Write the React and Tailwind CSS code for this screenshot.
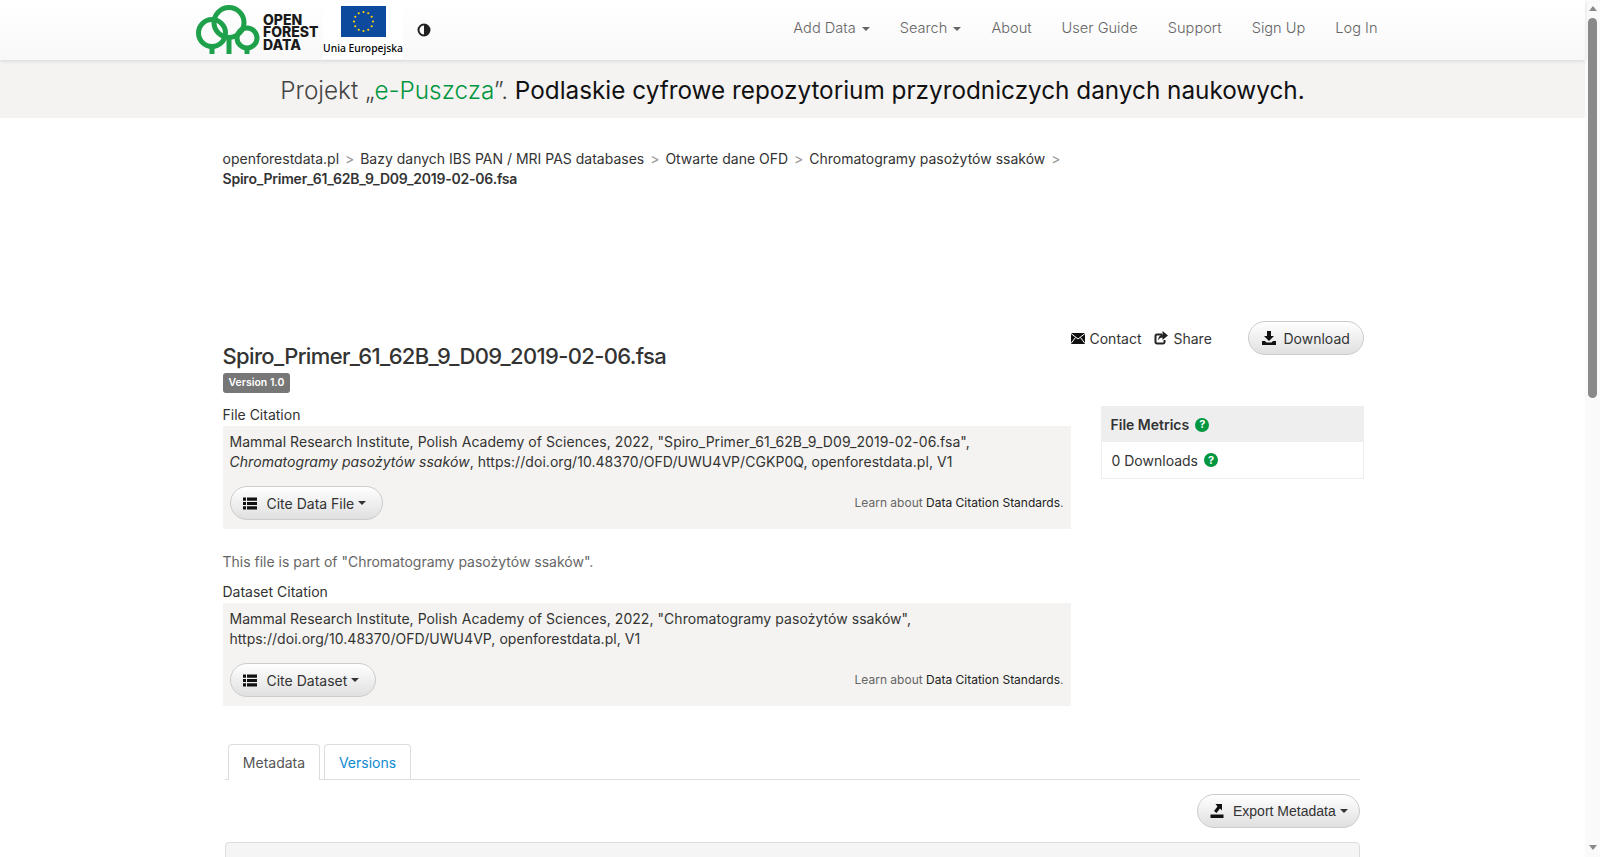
const font = { fontFamily: '"Inter", "Liberation Sans", sans-serif' };

function Caret({ className = '' }) {
  return <span className={`ml-1 inline-block border-x-[4px] border-t-[4px] border-x-transparent border-t-current ${className}`} />;
}

function Logo() {
  return (
    <div className="flex h-[56px] w-[130px] items-center">
      <svg width="70" height="50" viewBox="0 0 70 50" fill="none" stroke="#1fa04a" strokeWidth="5">
        <circle cx="19" cy="28" r="13.500" />
        <circle cx="36" cy="17.500" r="15" />
        <circle cx="54" cy="33" r="10" />
        <path d="M19 41v8M36 32v17M54 43v6" />
      </svg>
      <div className="mt-[5px] text-[14px] font-extrabold leading-[12.500px] text-[#1a1a1a]">OPEN<br />FOREST<br />DATA</div>
    </div>
  );
}

function EuFlag() {
  const stars = Array.from({ length: 12 }, (_, i) => {
    const a = (i * Math.PI) / 6;
    return <circle key={i} cx={22.5 + 9.500 * Math.cos(a)} cy={15.5 + 9.500 * Math.sin(a)} r="1.1" fill="#ffd400" />;
  });
  return (
    <div className="flex h-[58px] w-[80px] flex-col items-center bg-white pt-[5px]">
      <svg width="45" height="31" viewBox="0 0 45 31"><rect width="45" height="31" fill="#0d4a9e" />{stars}</svg>
      <span className="mt-[5px] whitespace-nowrap text-[10.300px] font-medium leading-[13px] text-black" style={{ fontFamily: '"Noto Sans", sans-serif' }}>Unia Europejska</span>
    </div>
  );
}

function NavItem({ label, caret }) {
  return <a className="flex items-center text-[14.600px] font-light text-[#666]">{label}{caret && <Caret className="ml-[6px]" />}</a>;
}

function ListIcon() {
  return (
    <svg width="14" height="13" viewBox="0 0 14 13" fill="#111">
      <path d="M0 .5h3v3.200H0zM4 .5h10v3.200H4zM0 4.900h3v3.200H0zM4 4.900h10v3.200H4zM0 9.300h3v3.200H0zM4 9.300h10v3.200H4z" />
    </svg>
  );
}

function DownloadIcon() {
  return (
    <svg width="14" height="14" viewBox="0 0 14 14" fill="#111">
      <path d="M5 0h4v5h3L7 10 2 5h3zM0 10h3l1.500 1.500h5L11 10h3v4H0z" />
    </svg>
  );
}

function MailIcon() {
  return (
    <svg width="14" height="11" viewBox="0 0 14 11">
      <rect width="14" height="11" fill="#111" />
      <path d="M0 .5l7 5.500 7-5.500M0 10.500l4.500-6M14 10.500l-4.500-6" fill="none" stroke="#fff" strokeWidth="1" />
    </svg>
  );
}

function ShareIcon() {
  return (
    <svg width="14" height="14" viewBox="0 0 14 14">
      <path d="M8 3.500H3A1.500 1.500 0 0 0 1.500 5v6A1.500 1.500 0 0 0 3 12.500h6a1.500 1.500 0 0 0 1.500-1.500V9" fill="none" stroke="#222" strokeWidth="2" />
      <path d="M8.500 0L14 4.500 8.500 9V6.500C6.500 6.500 5 7.500 4 9.500c0-3.500 1.800-5.500 4.500-6z" fill="#222" />
    </svg>
  );
}

function ExportIcon() {
  return (
    <svg width="14" height="14" viewBox="0 0 14 14" fill="#111">
      <path d="M.5 10.500h13V14H.5zM5.500 0H12v6.500L10 4.500 6.500 9 4 7l3.500-4.500z" />
    </svg>
  );
}

function HelpIcon() {
  return (
    <span className="ml-[6px] inline-flex h-[14px] w-[14px] items-center justify-center rounded-full bg-[#009640] text-[11px] font-bold leading-none text-white">?</span>
  );
}

function Pill({ children, className = '' }) {
  return (
    <button className={`flex h-[34px] items-center rounded-[17px] border border-[#ccc] bg-gradient-to-b from-white to-[#e0e0e0] text-[14px] text-[#333] ${className}`}>
      {children}
    </button>
  );
}

function Citation({ children, cite, width }) {
  return (
    <div className="mt-[1px] bg-[#f4f3f1] px-[7px] pb-[9px] pt-[6px]">
      <div className="text-[14px] leading-[20px] tracking-[0.05px] text-[#333]">{children}</div>
      <div className="mt-[14px] flex items-center justify-between">
        <Pill className={`${width} pl-[12px]`}>
          <ListIcon />
          <span className="ml-[10px]">{cite}</span>
          <Caret />
        </Pill>
        <span className="text-[12px] text-[#666]">Learn about <a className="text-[#222]">Data Citation Standards</a>.</span>
      </div>
    </div>
  );
}

function Sep() {
  return <span className="mx-[2px] text-[#999]">&gt;</span>;
}

export default function App() {
  return (
    <div className="flex h-[857px] overflow-hidden bg-white text-[#333]" style={font}>
      <div className="w-[1585px] shrink-0">
        <header className="relative z-10 flex h-[60px] justify-center bg-gradient-to-b from-white to-[#f8f8f8] shadow-[0_1px_4px_rgba(0,0,0,0.12)]">
          <div className="flex w-[1170px] items-center">
            <div className="-ml-[14.500px] flex items-center">
              <Logo />
              <EuFlag />
              <svg width="14" height="14" viewBox="0 0 14 14" className="ml-[14px]">
                <circle cx="7" cy="7" r="5.500" fill="none" stroke="#222" strokeWidth="2" />
                <path d="M7 1.500a5.500 5.500 0 0 1 0 11z" fill="#222" />
              </svg>
            </div>
            <nav className="mb-[2px] ml-auto flex gap-[30px]">
              <NavItem label="Add Data" caret />
              <NavItem label="Search" caret />
              <NavItem label="About" />
              <NavItem label="User Guide" />
              <NavItem label="Support" />
              <NavItem label="Sign Up" />
              <NavItem label="Log In" />
            </nav>
          </div>
        </header>

        <div className="flex h-[58px] items-center justify-center bg-[#f4f3f1] pt-[3px] text-[24.300px] font-light text-[#222]">
          <span className="text-[#444]">Projekt „<span className="text-[#009640]">e-Puszcza</span>”.&nbsp;</span>
          <span className="font-normal text-[#111]">Podlaskie cyfrowe repozytorium przyrodniczych danych naukowych.</span>
        </div>

        <main className="mx-auto w-[1170px]">
          <div className="px-[15px] pt-[31px] text-[14px] leading-[20px]">
            <div>
              openforestdata.pl <Sep /> Bazy danych IBS PAN / MRI PAS databases <Sep /> Otwarte dane OFD <Sep /> Chromatogramy pasożytów ssaków <Sep />
            </div>
            <div className="font-semibold tracking-[-0.220px]">Spiro_Primer_61_62B_9_D09_2019-02-06.fsa</div>
          </div>

          <div className="mt-[132px] flex pl-[15px]">
            <div className="w-[848px]">
              <h1 className="mt-[21px] text-[22px] font-medium leading-[28px] tracking-[-0.650px]">Spiro_Primer_61_62B_9_D09_2019-02-06.fsa</h1>
              <span className="mt-[3px] block w-fit rounded-[3px] bg-[#777] px-[6px] py-[3px] text-[10.500px] font-semibold leading-[14px] text-white">Version 1.0</span>
              <div className="mt-[12px] text-[14px] leading-[20px]">File Citation</div>
              <Citation cite="Cite Data File" width="w-[153px]">
                Mammal Research Institute, Polish Academy of Sciences, 2022, "Spiro_Primer_61_62B_9_D09_2019-02-06.fsa",<br />
                <em>Chromatogramy pasożytów ssaków</em>, https://doi.org/10.48370/OFD/UWU4VP/CGKP0Q, openforestdata.pl, V1
              </Citation>
              <p className="mt-[23px] text-[14px] leading-[20px] text-[#666]">This file is part of "Chromatogramy pasożytów ssaków".</p>
              <div className="mt-[10px] text-[14px] leading-[20px]">Dataset Citation</div>
              <Citation cite="Cite Dataset" width="w-[146px]">
                Mammal Research Institute, Polish Academy of Sciences, 2022, "Chromatogramy pasożytów ssaków",<br />
                https://doi.org/10.48370/OFD/UWU4VP, openforestdata.pl, V1
              </Citation>
            </div>
            <aside className="ml-[30px] w-[263px]">
              <div className="-ml-[30px] flex h-[34px] items-center justify-between text-[14px]">
                <div className="flex items-center">
                  <a className="flex items-center gap-[5px]"><MailIcon />Contact</a>
                  <a className="ml-[13px] flex items-center gap-[5px]"><ShareIcon />Share</a>
                </div>
                <Pill className="w-[116px] pl-[13px]">
                  <DownloadIcon />
                  <span className="ml-[8px]">Download</span>
                </Pill>
              </div>
              <div className="mt-[51px] border border-[#eee]">
                <div className="flex h-[35px] items-center bg-[#eee] px-[9px] text-[14px] font-semibold">File Metrics<HelpIcon /></div>
                <div className="flex h-[36px] items-center px-[10px] text-[14px]">0 Downloads<HelpIcon /></div>
              </div>
            </aside>
          </div>

          <div className="mt-[38px] px-[17.500px]">
            <div className="flex h-[36px] gap-[4px] border-b border-[#ddd] pl-[3px]">
              <a className="flex h-[36px] w-[92px] items-center justify-center rounded-t-[4px] border border-b-0 border-[#ddd] bg-white text-[14px] text-[#555]">Metadata</a>
              <a className="flex h-[35px] w-[87px] items-center justify-center rounded-t-[4px] border border-b-0 border-[#ddd] text-[14px] text-[#0e8bd2]">Versions</a>
            </div>
            <div className="mt-[14px] flex justify-end">
              <Pill className="w-[163px] pl-[12px]">
                <ExportIcon />
                <span className="ml-[9px]" style={{ fontFamily: '"Liberation Sans", sans-serif' }}>Export Metadata</span>
                <Caret />
              </Pill>
            </div>
            <div className="mt-[14px] h-[200px] rounded-[4px] border border-[#ddd] bg-[#f5f5f5]" />
          </div>
        </main>
      </div>

      <div className="flex w-[15px] flex-col items-center bg-[#fafafa] pb-[7px] pt-[6px]">
        <span className="border-x-[4.500px] border-b-[5px] border-x-transparent border-b-[#8a8a8a]" />
        <div className="mt-[7px] h-[380px] w-[9px] rounded-full bg-[#8a8a8a]" />
        <span className="mt-auto border-x-[4.500px] border-t-[5px] border-x-transparent border-t-[#8a8a8a]" />
      </div>
    </div>
  );
}
